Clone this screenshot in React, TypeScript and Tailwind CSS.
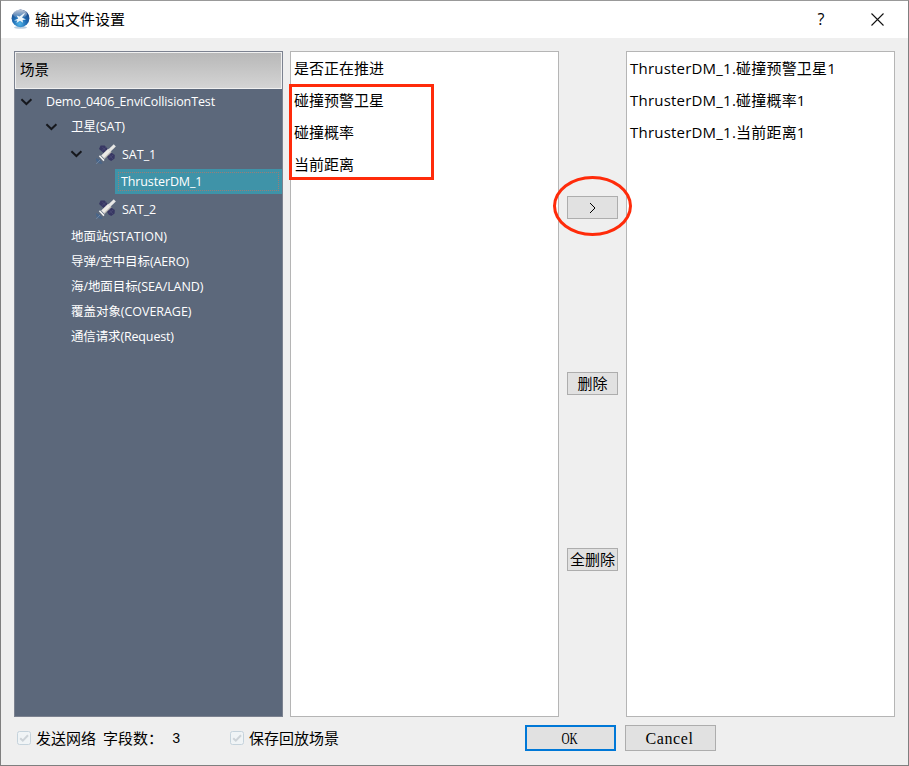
import type { ReactNode } from "react";
import { clsx } from "clsx";

interface TreeItem {
  label: string;
  indent: string;
  open?: boolean;
  satellite?: boolean;
  selected?: boolean;
  textClass?: string;
}

const treeItems: TreeItem[] = [
  { label: "Demo_0406_EnviCollisionTest", indent: "pl-[5px]", open: true, textClass: "tracking-[-0.12px]" },
  { label: "卫星(SAT)", indent: "pl-[30px]", open: true },
  { label: "SAT_1", indent: "pl-[55px]", open: true, satellite: true },
  { label: "ThrusterDM_1", indent: "pl-[100px]", selected: true, textClass: "tracking-[-0.12px]" },
  { label: "SAT_2", indent: "pl-[81px]", satellite: true },
  { label: "地面站(STATION)", indent: "pl-[56px]" },
  { label: "导弹/空中目标(AERO)", indent: "pl-[56px]", textClass: "tracking-[-0.1px]" },
  { label: "海/地面目标(SEA/LAND)", indent: "pl-[56px]", textClass: "tracking-[-0.08px]" },
  { label: "覆盖对象(COVERAGE)", indent: "pl-[56px]", textClass: "tracking-[-0.04px]" },
  { label: "通信请求(Request)", indent: "pl-[56px]", textClass: "tracking-[-0.15px]" },
];

const availableFields = ["是否正在推进", "碰撞预警卫星", "碰撞概率", "当前距离"];

const selectedFields = [
  "ThrusterDM_1.碰撞预警卫星1",
  "ThrusterDM_1.碰撞概率1",
  "ThrusterDM_1.当前距离1",
];

function AppIcon() {
  return (
    <svg width="20" height="20" viewBox="0 0 20 20" className="-mt-px -ml-px">
      <defs>
        <radialGradient id="globe" cx="0.45" cy="0.8" r="0.75">
          <stop offset="0" stopColor="#4fb4e8" />
          <stop offset="0.5" stopColor="#1f6cb4" />
          <stop offset="1" stopColor="#1a4484" />
        </radialGradient>
        <linearGradient id="gloss" x1="0" y1="0" x2="0" y2="1">
          <stop offset="0" stopColor="#fff" stopOpacity="0.7" />
          <stop offset="1" stopColor="#fff" stopOpacity="0.1" />
        </linearGradient>
      </defs>
      <ellipse cx="10.5" cy="18.4" rx="6.5" ry="1.4" fill="#b9cde0" />
      <circle cx="10.5" cy="9.3" r="8.9" fill="url(#globe)" />
      <ellipse cx="10" cy="5" rx="7" ry="4.2" fill="url(#gloss)" />
      <path
        d="M4 11.4 8.2 9.6 6.6 6.4 9.6 7.4 14.4 4 14.8 4.8 12 8.4 16 10.4 12.6 11 13 13.8 10 11.8 6.4 14 7.4 11.6Z"
        fill="#eef5fa"
      />
    </svg>
  );
}

function Satellite() {
  return (
    <svg width="21" height="21" viewBox="0 0 21 21" className="shrink-0">
      <path d="M-0.2 14C-0.4 18 2.5 20.4 6.5 19.4L4 16Z" fill="#486589" />
      <path d="M0.2 20 4 16" stroke="#7086a3" />
      <path d="M3 5 4.6 1.6 8.6 1.4 12 5.2 7.6 9Z" fill="#373763" />
      <path d="M10.6 12 15.2 8.4 18.8 11 18.6 14.4 15.2 17 12.6 15.4Z" fill="#373763" />
      <path d="M6.2 2.8 10 7M5.8 6.6 10.4 3M12.8 10.2 17 15.2M12.6 14.6 17.4 10.8" stroke="#50507a" strokeWidth="0.6" />
      <path d="M6.8 13.2 13.8 6.4" stroke="#eceae6" strokeWidth="4.6" />
      <path d="M8.2 14.6 15.2 7.8" stroke="#b3b1ae" strokeWidth="1.2" />
      <path d="M13.6 6.4 18.8 1.4" stroke="#e8e8e6" strokeWidth="3" />
      <path d="M3.4 11.8 8 16.6" stroke="#f4f4f2" strokeWidth="1.6" />
    </svg>
  );
}

function TreeRow({ item }: { item: TreeItem }) {
  return (
    <div className={clsx("flex items-center", item.satellite ? "h-[30px]" : "h-[25px]", item.indent)}>
      {item.open ? (
        <svg width="25" height="12" viewBox="0 0 25 12" className="mr-px shrink-0" fill="none">
          <path d="M1.4 3.2 6.4 8 11.4 3.2" stroke="#16181d" strokeWidth="2" />
        </svg>
      ) : null}
      {item.satellite ? <Satellite /> : null}
      {item.selected ? (
        <span className="flex h-full flex-1 items-center bg-[#3f93a8] p-[3px]">
          <span
            className={clsx(
              "flex h-full w-full items-center border border-dotted border-[#9b7d76] pt-[2px] pl-[2px] whitespace-nowrap",
              item.textClass
            )}
          >
            {item.label}
          </span>
        </span>
      ) : (
        <span className={clsx("pt-[2px] whitespace-nowrap", item.satellite && "pl-[5px]", item.textClass)}>
          {item.label}
        </span>
      )}
    </div>
  );
}

function FieldList({ items, textClass }: { items: string[]; textClass?: string }) {
  return (
    <ul className={clsx("h-full w-[269px] border border-[#b5b5b5] bg-white pl-[3px] text-[15px]", textClass)}>
      {items.map((item) => (
        <li key={item} className="flex h-8 items-center whitespace-nowrap">
          {item}
        </li>
      ))}
    </ul>
  );
}

function SideButton({ children }: { children: ReactNode }) {
  return (
    <button className="flex h-[23px] w-[51px] items-center justify-center border border-[#adadad] bg-[#e1e1e1] pb-px text-[15px] whitespace-nowrap">
      {children}
    </button>
  );
}

function DisabledCheck() {
  return (
    <svg width="14" height="14" viewBox="0 0 14 14" fill="none" className="-mt-px shrink-0">
      <rect x="0.5" y="0.5" width="13" height="13" rx="2" fill="#f0f4f6" stroke="#c5d3dc" />
      <path d="M3.2 7.2 5.8 9.7 11 4.2" stroke="#cdd3d8" strokeWidth="2" />
    </svg>
  );
}

export default function App() {
  return (
    <div className="relative flex h-[766px] w-[909px] flex-col border border-[#7f7f7f] border-t-[#999] bg-[#efefef] font-['Open_Sans','Noto_Sans_CJK_SC',sans-serif] text-black">
      <header className="flex h-[37px] shrink-0 items-center bg-white pl-[10px]">
        <AppIcon />
        <h1 className="flex-1 pl-[5px] text-[15px]">输出文件设置</h1>
        <span className="mb-px w-[12px] text-center text-[16px]">?</span>
        <svg width="13" height="13" viewBox="0 0 13 13" className="mr-[24px] mb-px ml-[44px]">
          <path d="M0.5 0.5 12.5 12.5M12.5 0.5 0.5 12.5" stroke="#111" strokeWidth="1.1" />
        </svg>
      </header>

      <main className="mt-[13px] ml-[13px] flex h-[666px] shrink-0">
        <section className="w-[269px] border border-[#7c8290] bg-[#5c687b] text-[12.5px] text-white">
          <div className="flex h-[37px] items-center border border-[#f0f0f0] bg-linear-to-b from-[#b8b8b8] to-[#d4d4d4] pb-px pl-[4px] text-[14.5px] text-black">
            场景
          </div>
          {treeItems.map((item) => (
            <TreeRow key={item.label} item={item} />
          ))}
        </section>
        <div className="w-[7px]" />
        <FieldList items={availableFields} />
        <div className="flex w-[67px] flex-col items-center gap-[153px] pt-[145px]">
          <SideButton>
            <svg width="7" height="12" viewBox="0 0 7 12" fill="none" className="mt-px">
              <path d="M1 1 6 6 1 11" stroke="#000" />
            </svg>
          </SideButton>
          <SideButton>删除</SideButton>
          <SideButton>全删除</SideButton>
        </div>
        <FieldList items={selectedFields} textClass="tracking-[0.21px]" />
      </main>

      <footer className="mt-[8px] flex h-[26px] items-center pl-[16px] text-[15px]">
        <DisabledCheck />
        <span className="w-[66px] pl-[5px] whitespace-nowrap">发送网络</span>
        <span className="w-[75px] pl-[6px] whitespace-nowrap">字段数：</span>
        <span className="w-[58px] pt-[2px] font-['Liberation_Mono',monospace] text-[14px]">3</span>
        <DisabledCheck />
        <span className="w-[281px] pl-[5px]">保存回放场景</span>
        <button className="flex h-[26px] w-[91px] items-center justify-center border-2 border-[#0078d7] bg-[#e1e1e1] pt-[2px] pr-px font-['Liberation_Serif',serif] text-[16px]">
          <span className="inline-block scale-x-[0.7]">OK</span>
        </button>
        <button className="ml-[9px] flex h-[26px] w-[91px] items-center justify-center border border-[#adadad] bg-[#e1e1e1] pt-[2px] pr-[2px] font-['Liberation_Serif',serif] text-[16px] tracking-[0.6px]">
          Cancel
        </button>
      </footer>

      {/* red callouts drawn over the dialog */}
      <div className="pointer-events-none absolute top-[83px] left-[288px] h-[96px] w-[145px] border-3 border-[#ff2b0a]" />
      <div className="pointer-events-none absolute top-[175px] left-[552px] h-[60px] w-[79px] rounded-[50%] border-3 border-[#ff2b0a]" />
    </div>
  );
}
